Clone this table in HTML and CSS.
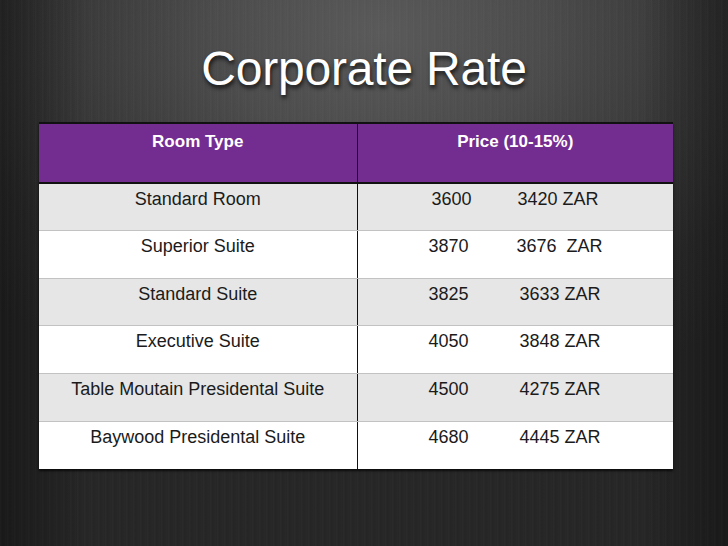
FILE: index.html
```html
<!DOCTYPE html>
<html>
<head>
<meta charset="utf-8">
<link rel="stylesheet" href="styles.css">
</head>
<body>
<div class="slide">
  <h1 class="title">Corporate Rate</h1>
  <table class="rates">
    <thead>
      <tr>
        <th class="col-type">Room Type</th>
        <th class="col-price">Price (10-15%)</th>
      </tr>
    </thead>
    <tbody>
      <tr class="alt">
        <td class="type">Standard Room</td>
        <td class="price"><span class="num first">3600</span><span class="zar">3420 ZAR</span></td>
      </tr>
      <tr>
        <td class="type">Superior Suite</td>
        <td class="price"><span class="num second">3870</span><span class="zar">3676  ZAR</span></td>
      </tr>
      <tr class="alt">
        <td class="type">Standard Suite</td>
        <td class="price"><span class="num">3825</span><span class="zar">3633 ZAR</span></td>
      </tr>
      <tr>
        <td class="type">Executive Suite</td>
        <td class="price"><span class="num">4050</span><span class="zar">3848 ZAR</span></td>
      </tr>
      <tr class="alt">
        <td class="type">Table Moutain Presidental Suite</td>
        <td class="price"><span class="num">4500</span><span class="zar">4275 ZAR</span></td>
      </tr>
      <tr class="last">
        <td class="type">Baywood Presidental Suite</td>
        <td class="price"><span class="num">4680</span><span class="zar">4445 ZAR</span></td>
      </tr>
    </tbody>
  </table>
</div>
</body>
</html>
```

FILE: styles.css
```css
html, body {
  margin: 0;
  padding: 0;
}

body {
  background: #262626;
  font-family: "Liberation Sans", Arial, sans-serif;
}

.slide {
  width: 728px;
  height: 546px;
  overflow: hidden;
  box-sizing: border-box;
  padding-top: 41px;
  background:
    repeating-linear-gradient(90deg, rgba(255,255,255,0.018) 0px, rgba(255,255,255,0.018) 1px, rgba(0,0,0,0.02) 2px, rgba(0,0,0,0) 4px, rgba(255,255,255,0.012) 6px, rgba(0,0,0,0.025) 7px),
    linear-gradient(90deg, rgba(0,0,0,0.35) 0%, rgba(0,0,0,0) 12%, rgba(0,0,0,0) 88%, rgba(0,0,0,0.35) 100%),
    radial-gradient(ellipse 75% 70% at 52% 6%, #5a5a5a 0%, #4c4c4c 30%, #3a3a3a 55%, #2b2b2b 80%, #262626 100%);
}

.title {
  margin: 0;
  text-align: center;
  font-family: "Liberation Sans", Arial, sans-serif;
  font-weight: normal;
  font-size: 48px;
  line-height: 56px;
  color: #ffffff;
  text-shadow: 1px 3px 4px rgba(0,0,0,0.75);
  letter-spacing: -0.2px;
}

.rates {
  margin: 25px 0 0 39px;
  width: 634px;
  border-collapse: collapse;
  table-layout: fixed;
  box-shadow: 0 2px 2px rgba(0,0,0,0.7);
}

.rates th,
.rates td {
  padding: 0;
  vertical-align: top;
  box-sizing: border-box;
}

.rates thead th {
  background: #732d91;
  color: #ffffff;
  font-size: 17px;
  font-weight: bold;
  line-height: 20px;
  height: 60px;
  padding-top: 8px;
  border-top: 2px solid #111111;
  border-bottom: 2px solid #111111;
  text-align: center;
}

.rates thead th.col-type {
  width: 318px;
  border-right: 1px solid #111111;
}

.rates tbody tr {
  height: 47.67px;
  background: #ffffff;
}

.rates tbody tr.alt {
  background: #e6e6e6;
}

.rates tbody td {
  font-size: 18px;
  line-height: 21px;
  color: #1b1b1b;
  padding-top: 5px;
  border-bottom: 1px solid #c2c2c2;
}

.rates tbody tr.last td {
  border-bottom: none;
}

.rates tbody td.type {
  text-align: center;
  border-right: 1px solid #111111;
}

.rates tbody td.price {
  padding-left: 71px;
  white-space: pre;
}

.num {
  display: inline-block;
  width: 91px;
}

.num.first {
  margin-left: 3px;
  width: 86px;
}

.num.second {
  width: 88px;
}
```
